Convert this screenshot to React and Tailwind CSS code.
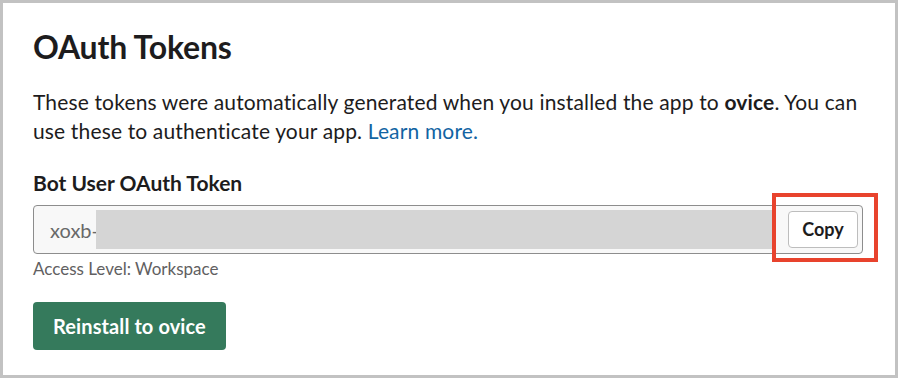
export default function App() {
  return (
    <div className="w-[898px] h-[378px] bg-[#c2c2c2] p-[3px] font-['Lato','Noto_Sans',sans-serif]">
      <div className="w-full h-full bg-white pl-[30px] pr-[30px] pt-[22px] text-[#1d1c1d]">
        <h1 className="text-[32px] font-bold leading-[44px] tracking-[-0.2px]">OAuth Tokens</h1>

        <p className="mt-[18px] text-[21px] leading-[29px] tracking-[0.15px] text-[#1d1c1d]">
          These tokens were automatically generated when you installed the app to <b>ovice</b>. You can use these to authenticate your app.{' '}
          <a className="text-[#1264a3]">Learn more.</a>
        </p>

        <div className="mt-[26px] text-[21px] font-bold leading-[24px]">Bot User OAuth Token</div>

        <div className="relative mt-[10px] w-[830px]">
          <div className="flex items-center h-[49px] rounded-[4px] border border-[#8d8d8d] bg-[#f8f8f8] pl-[16px] pr-[4px]">
            <span className="text-[20px] text-[#696969]">xoxb-</span>
            <div className="ml-[-3px] h-[39px] w-[676px] shrink-0 bg-[#d5d5d5]" />
            <button className="ml-[16px] h-[37px] w-[70px] shrink-0 rounded-[4px] border border-[#bdbdbd] bg-white text-[18px] font-bold text-[#1d1c1d]">
              Copy
            </button>
          </div>
          <div className="absolute left-[739px] top-[-12px] h-[69px] w-[106px] border-[4px] border-[#e8432d]" />
        </div>

        <div className="mt-[3px] text-[17px] leading-[24px] text-[#616061]">Access Level: Workspace</div>

        <button className="mt-[21px] h-[48px] rounded-[4px] bg-[#357a5c] px-[20px] text-[20px] tracking-[0.1px] font-bold text-white">
          Reinstall to ovice
        </button>
      </div>
    </div>
  )
}
